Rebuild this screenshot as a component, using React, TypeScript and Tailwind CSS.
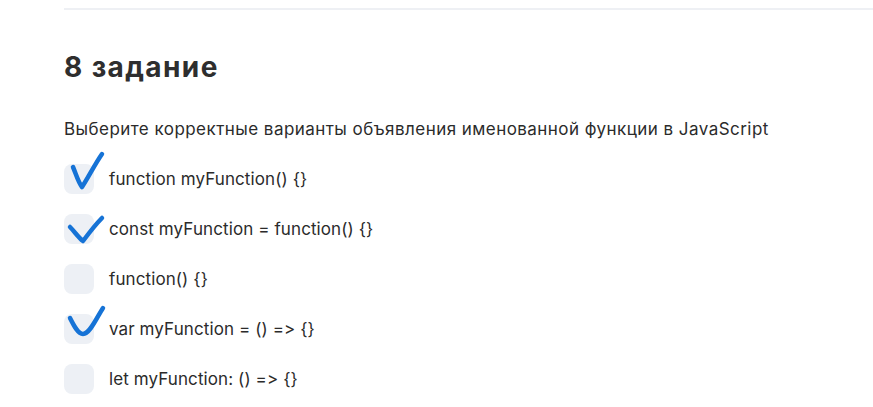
import React from "react";

type Opt = { text: string; check?: string };

const options: Opt[] = [
  { text: "function myFunction() {}", check: "M9 3 C 12 10, 14 18, 18 23 C 24 14, 31 0, 38 -10" },
  { text: "const myFunction = function() {}", check: "M6 13 C 10 17, 15 24, 19 27 C 25 19, 32 10, 38 4" },
  { text: "function() {}" },
  { text: "var myFunction = () => {}", check: "M6 4 C 10 12, 14 20, 19 20 C 26 20, 33 3, 39 -6" },
  { text: "let myFunction: () => {}" },
];

export default function App() {
  return (
    <div
      className="w-[873px] h-[407px] bg-white overflow-hidden [font-feature-settings:'calt'_0,'liga'_0]"
      style={{ fontFamily: "Inter, 'Noto Sans', sans-serif" }}
    >
      <div className="pl-16 pt-2">
        <div className="h-[2px] bg-[#eef0f4]" />
        <h2 className="mt-[40px] text-[28px] leading-[34px] font-bold text-[#2e2e2e] tracking-[1.4px]">8 задание</h2>
        <p className="mt-[33px] text-[17px] leading-[24px] text-[#2b2b2b] tracking-[0.45px]">
          Выберите корректные варианты объявления именованной функции в JavaScript
        </p>
        <div className="mt-[23px] flex flex-col gap-[20px]">
          {options.map((o, i) => (
            <div key={i} className="flex items-center gap-[15px]">
              <div className="relative w-[30px] h-[30px] rounded-[8px] bg-[#edf0f5] shrink-0">
                {o.check && (
                  <svg
                    className="absolute left-0 top-0 overflow-visible"
                    width="30"
                    height="30"
                    viewBox="0 0 30 30"
                    fill="none"
                  >
                    <path d={o.check} stroke="#1673d6" strokeWidth="4.5" strokeLinecap="round" strokeLinejoin="round" />
                  </svg>
                )}
              </div>
              <span className="text-[17px] leading-[24px] text-[#2b2b2b] tracking-[0.1px]">{o.text}</span>
            </div>
          ))}
        </div>
      </div>
    </div>
  );
}
